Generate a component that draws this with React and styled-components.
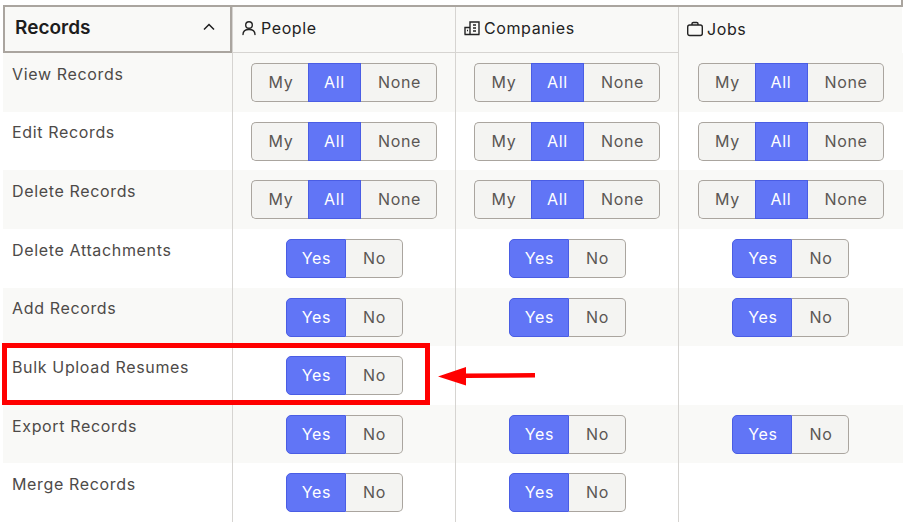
import React from "react";
import styled, { createGlobalStyle } from "styled-components";

const Global = createGlobalStyle`
    html, body {
        margin: 0;
        padding: 0;
        background: #fff;
    }
    body {
        font-family: "Inter", "Liberation Sans", sans-serif;
    }
`

const Page = styled.div`
    position: relative;
    width: 906px;
    height: 522px;
    overflow: hidden;
    padding: 0 3px;
    box-sizing: border-box;
`

const TopEdge = styled.div`
    width: 900px;
    height: 5px;
    box-sizing: border-box;
    border-right: 2px solid #aaa59f;
`

const Table = styled.div`
    width: 900px;
    border-top: 2px solid #aaa59f;
`

const Row = styled.div`
    display: grid;
    grid-template-columns: 229px 223px 223px 224px;
    height: ${props => props.$h || 58.61}px;
    background: ${props => props.$band ? '#f9f9f7' : '#fff'};
`

const Corner = styled.div`
    display: flex;
    align-items: center;
    justify-content: space-between;
    box-sizing: border-box;
    padding: 0 14px 4px 10px;
    background: #f9f9f7;
    border: 2px solid #aaa59f;
    border-top: 0;
    color: #1d1d1d;
    font-size: 19px;
    font-weight: 600;
`

const Head = styled.div`
    display: flex;
    align-items: center;
    gap: 4px;
    box-sizing: border-box;
    padding: 0 0 ${props => props.$open ? '2px' : '4px'} 8px;
    background: #f9f9f7;
    border-left: 1px solid #d6d4d1;
    border-bottom: ${props => props.$open ? '0' : '1px solid #d6d4d1'};
    color: #232323;
    font-size: 16px;
    letter-spacing: 0.6px;
    svg {
        flex: none;
    }
`

const Label = styled.div`
    padding: 10.68px 0 0 9px;
    color: #4d4a48;
    font-size: 16px;
    letter-spacing: 0.65px;
    line-height: 20px;
`

const Cell = styled.div`
    display: flex;
    justify-content: center;
    padding-top: 10px;
    box-sizing: border-box;
    border-left: 1px solid #d6d4d1;
`

const Toggle = styled.div`
    display: flex;
    height: 39px;
    box-sizing: border-box;
`

const Option = styled.div`
    display: flex;
    align-items: center;
    justify-content: center;
    box-sizing: border-box;
    width: ${props => props.$w}px;
    padding: 0 0 1px ${props => props.$nudge ? '2px' : '0'};
    background: ${props => props.$on ? '#6175f6' : '#f4f4f2'};
    color: ${props => props.$on ? '#fff' : '#5b5754'};
    border: 1px solid ${props => props.$on ? '#4a5de4' : '#aaa59f'};
    border-left-width: ${props => props.$on || props.$start ? '1px' : '0'};
    border-right-width: ${props => props.$on || props.$end ? '1px' : '0'};
    border-radius: ${props => props.$start ? '5px 0 0 5px' : props.$end ? '0 5px 5px 0' : '0'};
    font-size: 16px;
    letter-spacing: 0.7px;
`

const Highlight = styled.div`
    position: absolute;
    left: 2px;
    top: 343px;
    width: 428px;
    height: 62px;
    box-sizing: border-box;
    border: 5px solid #ff0000;
`

const Arrow = styled.svg`
    position: absolute;
    left: 436px;
    top: 362px;
`

const PersonIcon = () => (
    <svg width="16" height="16" viewBox="0 0 16 16" fill="none" stroke="#232323" strokeWidth="1.4">
        <circle cx="8" cy="5" r="3.3" />
        <path d="M2 14.5c0-3 2-5 6-5s6 2 6 5" strokeLinecap="round" />
    </svg>
)

const BuildingIcon = () => (
    <svg width="16" height="16" viewBox="0 0 16 16" fill="none" stroke="#232323" strokeWidth="1.4">
        <path d="M1 14.5V7.500h5M6 14.500V2h9v12.500M.5 14.500h15M9 5h3M9 8h3M9 11h3M3 10.500h1" />
    </svg>
)

const BriefcaseIcon = () => (
    <svg width="16" height="16" viewBox="0 0 16 16" fill="none" stroke="#232323" strokeWidth="1.4">
        <rect x="0.7" y="4" width="14.6" height="10.500" rx="2" />
        <path d="M5 4V2.800C5 2 5.600 1.500 6.300 1.500h3.400c.7 0 1.300.5 1.300 1.300V4" />
    </svg>
)

const Chevron = () => (
    <svg width="14" height="14" viewBox="0 0 14 14" fill="none" stroke="#1d1d1d" strokeWidth="1.5">
        <path d="M2 9.500l5-5 5 5" />
    </svg>
)

const Toggles = ({ kind }) => {
    if (kind === 'none') return <Cell />
    const options = kind === 'scope'
        ? [['My', 57, false, true], ['All', 53, true, false], ['None', 76, false, true]]
        : [['Yes', 60, true, true], ['No', 57, false, true]]
    return (
        <Cell>
            <Toggle>
                {options.map(([text, w, on, nudge], i) => (
                    <Option key={text} $w={w} $on={on} $nudge={nudge} $start={i === 0} $end={i === options.length - 1}>
                        {text}
                    </Option>
                ))}
            </Toggle>
        </Cell>
    )
}

const rows = [
    ['View Records', 'scope', 'scope', 'scope'],
    ['Edit Records', 'scope', 'scope', 'scope'],
    ['Delete Records', 'scope', 'scope', 'scope'],
    ['Delete Attachments', 'yes', 'yes', 'yes'],
    ['Add Records', 'yes', 'yes', 'yes'],
    ['Bulk Upload Resumes', 'yes', 'none', 'none'],
    ['Export Records', 'yes', 'yes', 'yes'],
    ['Merge Records', 'yes', 'yes', 'none'],
]

const App = () => {
    return (
        <Page>
            <Global />
            <TopEdge />
            <Table>
                <Row $h={46.2}>
                    <Corner>Records <Chevron /></Corner>
                    <Head><PersonIcon /> People</Head>
                    <Head><BuildingIcon /> Companies</Head>
                    <Head $open><BriefcaseIcon /> Jobs</Head>
                </Row>
                {rows.map((row, i) => (
                    <Row key={row[0]} $band={i % 2 === 0}>
                        <Label>{row[0]}</Label>
                        <Toggles kind={row[1]} />
                        <Toggles kind={row[2]} />
                        <Toggles kind={row[3]} />
                    </Row>
                ))}
            </Table>
            <Highlight />
            <Arrow width="100" height="28" viewBox="0 0 100 28">
                <path d="M2 14.500L30 5V11.500L99 11V15.500L30 16V23.500Z" fill="#ff0000" />
            </Arrow>
        </Page>
    )
}

export default App
